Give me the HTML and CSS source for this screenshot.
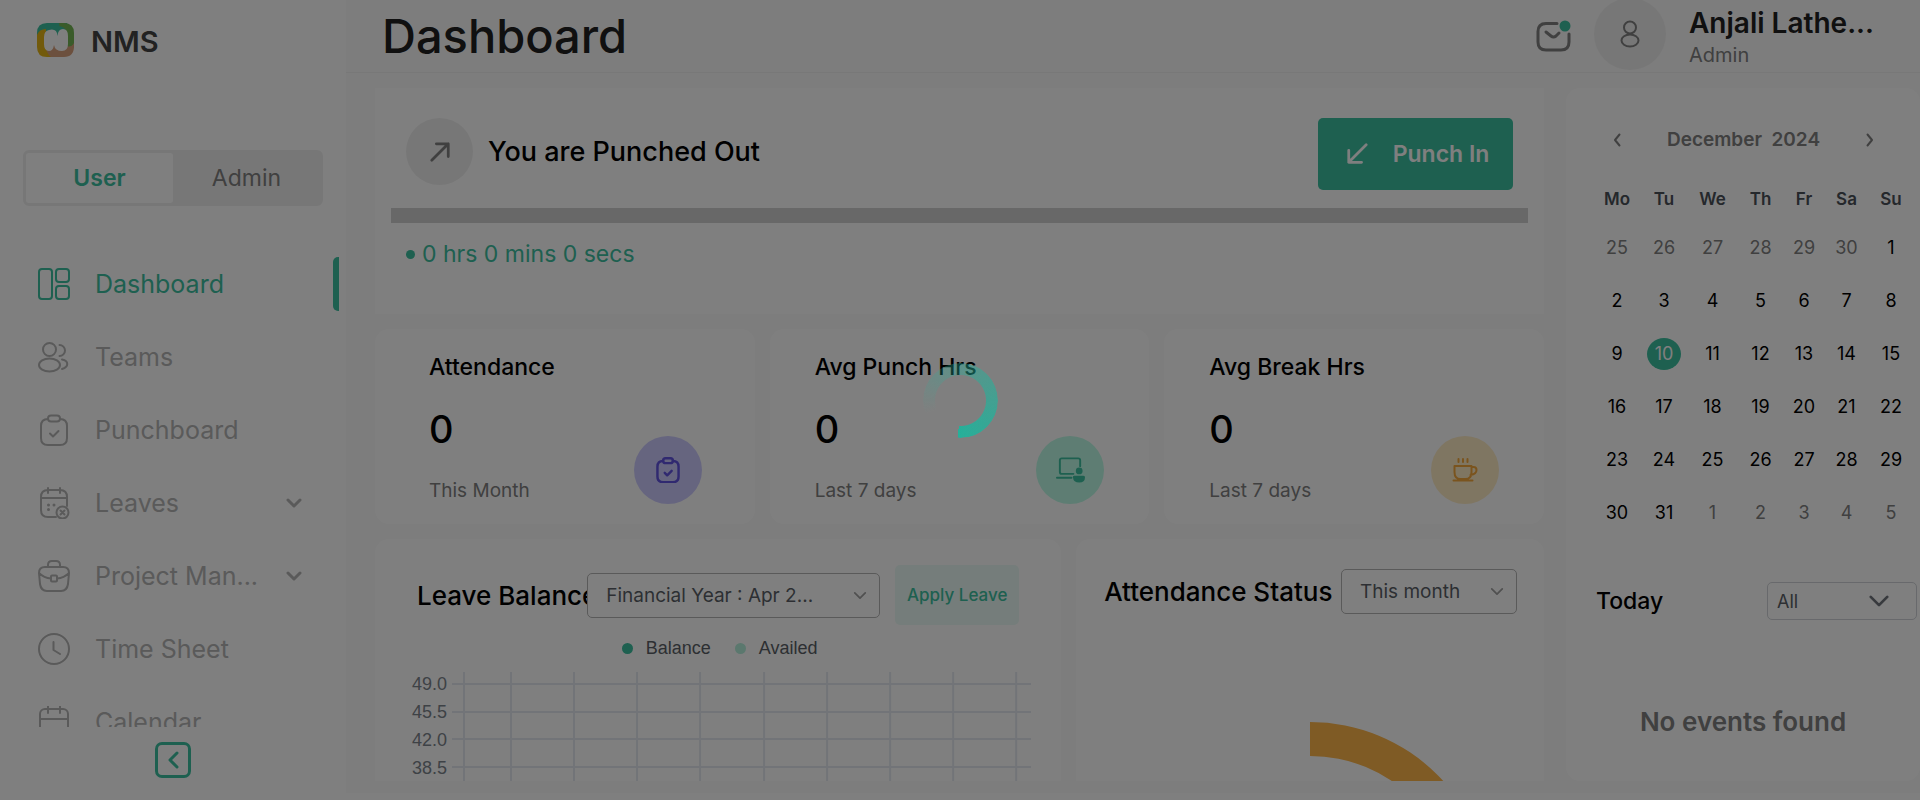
FILE: index.html
```
<!DOCTYPE html>
<html lang="en">
<head>
<meta charset="utf-8">
<title>NMS Dashboard</title>
<link rel="stylesheet" href="styles.css">
</head>
<body>
<svg class="sprite" aria-hidden="true">
  <symbol id="i-clip" viewBox="0 0 32 32"><rect x="3" y="5" width="26" height="26" rx="7"/><rect x="10" y="1.500" width="12" height="6" rx="3" class="fill-bg"/><path d="M12 19.500l3 3 5.500-5.500"/></symbol>
  <symbol id="i-clip-open" viewBox="0 0 32 32"><path d="M10 5q-7 0-7 7v12q0 7 7 7h12q7 0 7-7V12q0-7-7-7"/><rect x="10" y="1.500" width="12" height="6" rx="3"/><path d="M12 19.500l3 3 5.500-5.500"/></symbol>
  <symbol id="i-chev" viewBox="0 0 16 10"><path d="M2 2l6 6 6-6"/></symbol>
</svg>
<div class="app">
  <aside class="sidebar">
    <div class="brand">
      <svg class="brand-mark" viewBox="0 0 37 34" aria-hidden="true">
        <path fill="#3cc0a0" d="M0 14V10Q0 0 10 0h20L37 14z"/>
        <path fill="#74b655" d="M22 0h5q10 0 10 10v14q-2 5-14 5V8z"/>
        <path fill="#d9a07c" d="M6 22h20q8 4 11-2v3q0 11-10 11H10z"/>
        <path fill="#e5b517" d="M0 12Q2 6 9 6v20q2 6 5 8h-4Q0 34 0 24z"/>
        <path fill="#3cc0a0" d="M9 7q6-6 13-4 6 1 8 6L20 14z"/>
        <path fill="#fff" d="M12 7q8-2 8.500 6 .5-7 5.500-7 5 0 5 7v8q0 7-6 7-7 0-8-6-1 6-5 6-5 0-5-7v-7q0-6 5-7z"/>
      </svg>
      <span class="brand-name">NMS</span>
    </div>
    <div class="role">
      <button class="role-btn role-on" type="button">User</button>
      <button class="role-btn" type="button">Admin</button>
    </div>
    <nav class="nav">
      <a class="nav-item nav-on" href="#"><svg class="ico" viewBox="0 0 32 32"><rect x="1" y="1" width="13" height="30" rx="3"/><rect x="18" y="1" width="13" height="13" rx="3"/><rect x="18" y="18" width="13" height="13" rx="3"/></svg><span>Dashboard</span></a>
      <a class="nav-item" href="#"><svg class="ico" viewBox="0 0 32 32"><circle cx="11.500" cy="8.500" r="6.500"/><ellipse cx="11.500" cy="24" rx="10.500" ry="6.500"/><path d="M21.500 4a5.500 5.500 0 010 11M24 18.500c7 1.500 7 7.500 0 9.500"/></svg><span>Teams</span></a>
      <a class="nav-item" href="#"><svg class="ico"><use href="#i-clip-open"/></svg><span>Punchboard</span></a>
      <a class="nav-item" href="#"><svg class="ico" viewBox="0 0 32 32"><path d="M18 30H10q-7 0-7-7V10q0-7 7-7h12q7 0 7 7v9M3 11h26M10 1v5M22 1v5"/><path class="dots" d="M10.500 18v.1M16 18v.1M10.500 22.500v.1"/><circle cx="24.500" cy="25.500" r="6"/><path d="M22.500 23.500l4 4m0-4l-4 4"/></svg><span>Leaves</span><svg class="chev"><use href="#i-chev"/></svg></a>
      <a class="nav-item" href="#"><svg class="ico" viewBox="0 0 32 32"><path d="M7 7h18q6 0 6 6l-1 11q-1 7-7 7H9q-6 0-7-7L1 13q0-6 6-6zM10 7V5q0-4 4-4h4q4 0 4 4v2M1 13q5 5 12 5.500M19 18.500Q26 18 31 13"/><rect x="13" y="15.500" width="6" height="6" rx="1"/></svg><span>Project Man...</span><svg class="chev"><use href="#i-chev"/></svg></a>
      <a class="nav-item" href="#"><svg class="ico" viewBox="0 0 32 32"><circle cx="16" cy="16" r="15"/><path d="M15.500 9v8l6.500 4"/></svg><span>Time Sheet</span></a>
      <a class="nav-item" href="#"><svg class="ico" viewBox="0 0 32 32"><rect x="2" y="3" width="28" height="28" rx="5"/><path d="M2 13h28M10 0v7M22 0v7"/></svg><span>Calendar</span></a>
    </nav>
    <div class="side-foot">
      <button class="collapse" type="button" aria-label="Collapse menu"><svg viewBox="0 0 12 18"><path d="M10 2L3 9l7 7"/></svg></button>
    </div>
  </aside>

  <div class="main">
    <header class="top">
      <h1>Dashboard</h1>
      <button class="mail" type="button" aria-label="Notifications"><svg viewBox="0 0 36 32"><path d="M21 3.500H10q-8 0-8 8V22q0 8 8 8h15q8 0 8-8v-8"/><path d="M10 12l5 4q2.500 2 5 0l3-3"/><circle cx="29" cy="6" r="5.500"/></svg></button>
      <div class="avatar"><svg viewBox="0 0 20 28"><circle cx="10" cy="7.500" r="6"/><ellipse cx="10" cy="20.500" rx="8.500" ry="6"/></svg></div>
      <div class="who"><strong>Anjali Lathe...</strong><span>Admin</span></div>
    </header>

    <div class="content">
      <div class="left">
        <section class="punch">
          <div class="punch-row">
            <span class="disc"><svg viewBox="0 0 24 24"><path d="M3 21L21 3M8 3h13v14"/></svg></span>
            <h2>You are Punched Out</h2>
            <button class="punch-btn" type="button"><svg viewBox="0 0 24 24"><path d="M22 2L3 21M3 8v13h14"/></svg>Punch In</button>
          </div>
          <div class="bar"></div>
          <p class="elapsed">0 hrs 0 mins 0 secs</p>
        </section>

        <div class="stats">
          <section class="stat stat-first">
            <h3>Attendance</h3><b>0</b>
            <div class="stat-foot"><span>This Month</span><i class="badge violet"><svg><use href="#i-clip-open"/></svg></i></div>
          </section>
          <section class="stat">
            <h3>Avg Punch Hrs</h3><b>0</b>
            <div class="stat-foot"><span>Last 7 days</span><i class="badge mint"><svg class="big" viewBox="0 0 30 26"><path d="M18 17H6q-2 0-2-2V3q0-2 2-2h17q2 0 2 2v6M1 21h15"/><path class="solid" d="M24 10.500a3 3 0 010 7 3 3 0 010-7zM19 19h9q2 0 2 1.500 0 5.500-6 5.500t-6.500-5.500Q17.500 19 19 19z"/></svg></i></div>
          </section>
          <section class="stat">
            <h3>Avg Break Hrs</h3><b>0</b>
            <div class="stat-foot"><span>Last 7 days</span><i class="badge sand"><svg class="big" viewBox="0 0 28 26"><path d="M4 9h17v6q0 7-6 7h-5q-6 0-6-7zM21 10h2q3 0 3 3 0 4-6 5M3 23.500h19M8 2v3M12.500 2v3M17 2v3"/></svg></i></div>
          </section>
        </div>

        <div class="charts">
          <section class="card leave">
            <div class="card-head">
              <h2 class="clip-title">Leave Balance</h2>
              <span class="pick year"><select aria-label="Financial year"><option>Financial Year : Apr 2...</option></select><svg><use href="#i-chev"/></svg></span>
              <button class="apply" type="button">Apply Leave</button>
            </div>
            <div class="legend"><span>Balance</span><span class="pale">Availed</span></div>
            <div class="plot">
              <div class="ticks"><span>49.0</span><span>45.5</span><span>42.0</span><span>38.5</span></div>
              <svg class="grid" viewBox="0 0 579 140" preserveAspectRatio="none"><path d="M0 12h579M0 40h579M0 67h579M0 95h579M0 123h579M12 0v140M59 0v140M122 0v140M185 0v140M248 0v140M312 0v140M375 0v140M438 0v140M501 0v140M564 0v140"/></svg>
            </div>
          </section>
          <section class="card status">
            <div class="card-head">
              <h2>Attendance Status</h2>
              <span class="pick month"><select aria-label="Period"><option>This month</option></select><svg><use href="#i-chev"/></svg></span>
            </div>
            <svg class="donut" viewBox="0 0 360 360"><path d="M180 0a180 180 0 010 360v-34a146 146 0 000-292z"/></svg>
          </section>
        </div>
      </div>

      <aside class="right">
        <div class="cal-head">
          <button type="button" aria-label="Previous month"><svg viewBox="0 0 8 14"><path d="M6.500 1.500L2 7l4.500 5.500"/></svg></button>
          <strong>December&nbsp; 2024</strong>
          <button type="button" aria-label="Next month"><svg viewBox="0 0 8 14"><path d="M1.500 1.500L6 7l-4.500 5.500"/></svg></button>
        </div>
        <table class="cal">
          <colgroup><col class="c48"><col class="c46"><col class="c51"><col class="c45"><col class="c42"><col class="c43"><col class="c46"></colgroup>
          <thead><tr><th>Mo</th><th>Tu</th><th>We</th><th>Th</th><th>Fr</th><th>Sa</th><th>Su</th></tr></thead>
          <tbody>
            <tr><td class="off">25</td><td class="off">26</td><td class="off">27</td><td class="off">28</td><td class="off">29</td><td class="off">30</td><td>1</td></tr>
            <tr><td>2</td><td>3</td><td>4</td><td>5</td><td>6</td><td>7</td><td>8</td></tr>
            <tr><td>9</td><td><span class="today">10</span></td><td>11</td><td>12</td><td>13</td><td>14</td><td>15</td></tr>
            <tr><td>16</td><td>17</td><td>18</td><td>19</td><td>20</td><td>21</td><td>22</td></tr>
            <tr><td>23</td><td>24</td><td>25</td><td>26</td><td>27</td><td>28</td><td>29</td></tr>
            <tr><td>30</td><td>31</td><td class="off">1</td><td class="off">2</td><td class="off">3</td><td class="off">4</td><td class="off">5</td></tr>
          </tbody>
        </table>
        <div class="events-head">
          <h3>Today</h3>
          <span class="pick all"><select aria-label="Event type"><option>All</option></select><svg><use href="#i-chev"/></svg></span>
        </div>
        <p class="empty">No events found</p>
      </aside>
    </div>
  </div>
</div>
<div class="loading" role="status" aria-label="Loading"><div class="spinner"></div></div>
</body>
</html>
```
FILE: styles.css
```
* { box-sizing: border-box; }
:root { --teal: #3cc0a0; --ink: #000; --muted: #808080; --nav: #b4b4b4; --page: #fafafa; }
body { margin: 0; background: #fff; color: var(--ink); font-family: Inter, "Liberation Sans", sans-serif; overflow: hidden; }
h1, h2, h3, p { margin: 0; font-weight: 500; }
button, select { font: inherit; color: inherit; border: 0; background: none; padding: 0; margin: 0; }
svg { fill: none; stroke: currentColor; stroke-linecap: round; stroke-linejoin: round; display: block; flex: none; }
.sprite { position: absolute; width: 0; height: 0; }
.app { display: flex; height: 100vh; }

.sidebar { width: 346px; flex: none; display: flex; flex-direction: column; background: #fff; }
.brand { display: flex; align-items: center; gap: 17px; height: 80px; padding: 3px 37px 0; }
.brand-mark { width: 37px; height: 34px; stroke: none; margin-bottom: 4px; }
.brand-name { font-size: 29px; font-weight: 600; color: #444; }
.role { display: flex; margin: 70px 23px 0; height: 56px; border: 3px solid #efefef; border-radius: 6px; background: #efefef; }
.role-btn { flex: 1; font-size: 23px; color: #808080; }
.role-on { background: #fff; color: var(--teal); font-weight: 600; border-radius: 3px; }
.nav { flex: 1; min-height: 0; margin-top: 51px; padding-right: 7px; display: flex; flex-direction: column; gap: 19px; overflow: hidden; }
.nav-item { flex: none; display: flex; align-items: center; height: 54px; padding: 0 37px 0 38px; color: var(--nav); font-size: 25px; text-decoration: none; white-space: nowrap; }
.nav-on { color: var(--teal); padding-right: 0; }
.nav-on::after { content: ""; width: 6px; height: 54px; margin-left: auto; border-radius: 5px 0 0 5px; background: var(--teal); }
.ico { width: 32px; height: 32px; margin-right: 25px; stroke-width: 2; }
.dots { stroke-width: 3; }
.chev { width: 16px; height: 10px; margin-left: auto; stroke-width: 3; }
.side-foot { height: 73px; display: flex; justify-content: center; align-items: flex-start; padding-top: 15px; }
.collapse { width: 36px; height: 36px; border: 3px solid var(--teal); border-radius: 7px; display: grid; place-items: center; color: var(--teal); }
.collapse svg { width: 12px; height: 18px; stroke-width: 3; }

.main { flex: 1; min-width: 0; display: flex; flex-direction: column; background: var(--page); border-bottom: 7px solid #fff; }
.top { height: 73px; flex: none; display: flex; align-items: center; border-bottom: 1px solid #f0f0f0; padding: 0 30px 4px 36px; }
.top h1 { flex: 1; font-size: 47px; line-height: 60px; padding-top: 4px; color: #202020; }
.mail { color: var(--muted); }
.mail svg { width: 36px; height: 32px; stroke-width: 3; margin-top: 3px; }
.mail circle { fill: var(--teal); stroke: none; }
.avatar { width: 72px; height: 72px; border-radius: 50%; background: #efefef; margin: 0 23px 0 22px; display: grid; place-items: center; color: var(--muted); }
.avatar svg { width: 20px; height: 28px; stroke-width: 2; }
.who { width: 201px; display: flex; flex-direction: column; padding-top: 5px; }
.who strong { font-size: 28px; line-height: 36px; font-weight: 600; color: #202020; white-space: nowrap; }
.who span { font-size: 20px; line-height: 28px; color: var(--muted); }

.content { flex: 1; min-height: 0; display: flex; gap: 22px; margin: 15px 0 12px; padding-left: 29px; overflow: hidden; }
.left { flex: 1; min-width: 0; display: flex; flex-direction: column; gap: 15px; }
.punch { height: 226px; flex: none; background: #fff; padding: 30px 16px 0; }
.punch-row { display: flex; align-items: flex-start; padding: 0 15px; }
.disc { width: 67px; height: 67px; border-radius: 50%; background: #efefef; display: grid; place-items: center; color: var(--muted); }
.disc svg { width: 22px; height: 22px; stroke-width: 3; }
.punch h2 { flex: 1; font-size: 27px; line-height: 68px; margin-left: 15px; }
.punch-btn { width: 195px; height: 72px; border-radius: 5px; background: var(--teal); color: #fff; font-size: 23px; font-weight: 600; display: flex; align-items: center; justify-content: center; gap: 25px; padding-left: 4px; }
.punch-btn svg { width: 22px; height: 22px; stroke-width: 3; }
.bar { height: 15px; margin-top: 18px; background: #d0d0d0; }
.elapsed { display: flex; align-items: center; gap: 7px; padding: 0 15px; margin-top: 15px; font-size: 23px; line-height: 32px; font-weight: 400; color: var(--teal); }
.elapsed::before { content: ""; width: 9px; height: 9px; border-radius: 50%; background: var(--teal); }

.stats { flex: none; display: grid; grid-template-columns: repeat(3, 1fr); gap: 15px; }
.stat { height: 195px; background: #fff; border-radius: 14px; padding: 22px 45px 0; }
.stat-first { padding: 22px 53px 0 54px; }
.stat h3 { font-size: 23px; line-height: 32px; }
.stat b { display: block; margin-top: 24px; font-size: 38px; line-height: 44px; font-weight: 500; }
.stat-foot { display: flex; justify-content: space-between; font-size: 19px; line-height: 24px; color: var(--muted); margin-top: -15px; }
.stat-foot span { margin-top: 43px; }
.badge { width: 68px; height: 68px; border-radius: 50%; display: grid; place-items: center; }
.badge svg { width: 26px; height: 26px; stroke-width: 3; }
.badge .big { width: 29px; height: 26px; stroke-width: 2; }
.solid { fill: currentColor; stroke: none; }
.violet { background: #cdcbff; color: #6052e0; }
.mint { background: #bdfbe6; color: var(--teal); }
.sand { background: #ffecc5; color: #f5a83c; }

.charts { flex: none; display: grid; grid-template-columns: 685fr 467fr; gap: 15px; }
.card { height: 420px; min-width: 0; background: #fff; border-radius: 14px; }
.card-head { display: flex; align-items: center; }
.card-head h2 { font-size: 26px; white-space: nowrap; }
.leave .card-head { padding: 26px 42px 0; }
.clip-title { flex: 1; min-width: 0; overflow: hidden; }
.pick { display: flex; align-items: center; position: relative; height: 45px; border: 1px solid #b4b4b4; border-radius: 5px; color: #5a5f66; font-size: 19px; background: #fff; }
.pick select { appearance: none; width: 100%; height: 100%; padding: 0 18px; }
.pick svg { position: absolute; right: 12px; width: 14px; height: 9px; stroke-width: 2; color: #a0a0a0; pointer-events: none; }
.year { width: 293px; }
.month { width: 176px; margin-left: auto; }
.apply { width: 124px; height: 60px; margin-left: 15px; border-radius: 5px; background: #ebfbf6; color: var(--teal); font-size: 17px; font-weight: 500; }
.legend { display: flex; justify-content: center; gap: 24px; margin: 11px 0 0 3px; font: 18px/24px "Liberation Sans", sans-serif; color: #5a5f66; }
.legend span { display: flex; align-items: center; gap: 13px; }
.legend span::before { content: ""; width: 11px; height: 11px; border-radius: 50%; background: var(--teal); }
.legend .pale::before { background: #b6f0dc; }
.plot { display: flex; align-items: flex-start; margin: 10px 30px 0 37px; }
.ticks { width: 40px; flex: none; font: 18px/28px "Liberation Sans", sans-serif; color: #7d848c; }
.ticks span { display: block; }
.grid { flex: 1; min-width: 0; height: 140px; margin-top: 2px; stroke: #e4e9f0; stroke-width: 2; }
.status .card-head { padding: 30px 27px 0 28px; }
.donut { width: 360px; height: 360px; margin: 108px auto 0; fill: #ffb64a; stroke: none; }

.right { width: 354px; flex: none; background: #fff; border-radius: 14px; }
.cal-head { display: flex; justify-content: space-between; align-items: center; padding: 38px 46px 0 47px; color: var(--muted); }
.cal-head strong { font-size: 19px; line-height: 28px; font-weight: 600; }
.cal-head svg { width: 8px; height: 14px; stroke-width: 2; }
.cal { width: 321px; margin: 22px 0 0 27px; border-collapse: collapse; table-layout: fixed; font-size: 18px; text-align: center; }
.c42 { width: 42px; }
.c43 { width: 43px; }
.c45 { width: 45px; }
.c46 { width: 46px; }
.c48 { width: 48px; }
.c51 { width: 51px; }
.cal th { height: 45px; padding: 0; font-size: 17px; font-weight: 600; color: #4a5058; }
.cal td { height: 53px; padding: 0; }
.cal .off { color: var(--muted); }
.today { display: inline-block; width: 34px; line-height: 32px; border-radius: 50%; background: var(--teal); color: #fff; }
.events-head { display: flex; align-items: center; justify-content: space-between; padding: 0 3px 0 30px; margin-top: 43px; }
.events-head h3 { font-size: 23px; }
.all { width: 150px; height: 38px; border-color: #d0d3d8; font-size: 18px; }
.all select { padding: 0 9px; }
.all svg { right: 26px; width: 22px; height: 14px; color: #70757c; stroke-width: 2; }
.empty { margin-top: 84px; text-align: center; font-size: 26px; line-height: 36px; font-weight: 600; color: var(--muted); }

.loading { position: fixed; inset: 0; display: grid; place-items: center; background: rgba(0, 0, 0, .5); }
.spinner { width: 75px; height: 75px; border-radius: 50%; background: conic-gradient(from 184deg, transparent 18%, #26b09a); -webkit-mask: radial-gradient(closest-side, transparent 25px, #000 26px); mask: radial-gradient(closest-side, transparent 25px, #000 26px); }
```
